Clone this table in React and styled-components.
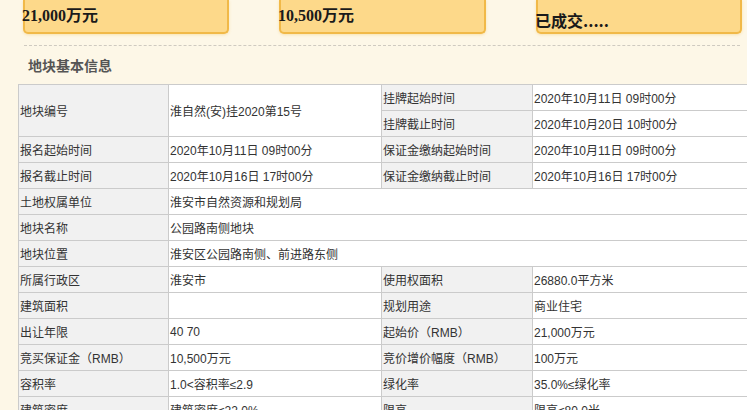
import styled, { createGlobalStyle } from 'styled-components';

const GlobalStyle = createGlobalStyle`
  html, body {
    margin: 0;
    padding: 0;
    background: #fdf7e7;
    overflow: hidden;
  }
`;

const Page = styled.div`
  width: 747px;
  height: 410px;
  overflow: hidden;
  background: #fdf7e7;
  font-family: "Liberation Sans", "Noto Sans CJK SC", sans-serif;
  color: #333;
`;

const PriceStrip = styled.div`
  display: grid;
  grid-template-columns: 206px 207px 206px;
  column-gap: 50px;
  padding-left: 23px;
`;

const PriceCard = styled.div`
  height: 34px;
  box-sizing: border-box;
  background: #fdd98a;
  border: 2px solid #f1b948;
  border-top: none;
  border-radius: 0 0 5px 5px;
  box-shadow: 0 1px 3px rgba(240, 185, 72, 0.35);
  display: flex;
  align-items: flex-start;
  padding-top: ${p => (p.$sans ? '11px' : '7px')};
`;

const PriceText = styled.span`
  margin-left: -3px;
  font-family: ${p => (p.$sans
    ? '"Noto Sans CJK SC", "Liberation Sans", sans-serif'
    : '"Liberation Serif", "Noto Sans CJK SC", serif')};
  font-weight: 700;
  font-size: 16px;
  line-height: 18px;
  color: #1a1a1a;
  white-space: nowrap;
`;

const Divider = styled.div`
  margin: 11px 7px 0 24px;
  border-top: 1px dashed #cfcac0;
`;

const SectionTitle = styled.h3`
  margin: 0;
  padding: 9px 0 0 28px;
  height: 29px;
  font-family: "Noto Sans CJK SC", sans-serif;
  font-size: 14px;
  line-height: 20px;
  font-weight: 700;
  color: #555;
`;

const TableWrap = styled.div`
  padding-left: 18px;
`;

const InfoTable = styled.table`
  border-collapse: collapse;
  table-layout: fixed;
  width: 780px;
  font-size: 12px;

  td {
    height: 25px;
    padding: 0 0 0 1px;
    border: 1px solid #cbcbcb;
    white-space: nowrap;
    overflow: hidden;
    vertical-align: middle;
  }
`;

const LabelCell = styled.td`
  background: #f1f1f1;
`;

const ValueCell = styled.td`
  background: #fff;
`;

const rows = [
  ['报名起始时间', '2020年10月11日 09时00分', '保证金缴纳起始时间', '2020年10月11日 09时00分'],
  ['报名截止时间', '2020年10月16日 17时00分', '保证金缴纳截止时间', '2020年10月16日 17时00分'],
  ['土地权属单位', '淮安市自然资源和规划局'],
  ['地块名称', '公园路南侧地块'],
  ['地块位置', '淮安区公园路南侧、前进路东侧'],
  ['所属行政区', '淮安市', '使用权面积', '26880.0平方米'],
  ['建筑面积', '', '规划用途', '商业住宅'],
  ['出让年限', '40 70', '起始价（RMB）', '21,000万元'],
  ['竞买保证金（RMB）', '10,500万元', '竞价增价幅度（RMB）', '100万元'],
  ['容积率', '1.0<容积率≤2.9', '绿化率', '35.0%≤绿化率'],
  ['建筑密度', '建筑密度≤22.0%', '限高', '限高≤80.0米'],
];

export default function App() {
  return (
    <Page>
      <GlobalStyle />
      <PriceStrip>
        <PriceCard><PriceText>21,000万元</PriceText></PriceCard>
        <PriceCard><PriceText>10,500万元</PriceText></PriceCard>
        <PriceCard $sans><PriceText $sans>已成交.....</PriceText></PriceCard>
      </PriceStrip>
      <Divider />
      <SectionTitle>地块基本信息</SectionTitle>
      <TableWrap>
        <InfoTable>
          <colgroup>
            <col style={{ width: 150 }} />
            <col style={{ width: 213 }} />
            <col style={{ width: 151 }} />
            <col style={{ width: 266 }} />
          </colgroup>
          <tbody>
            <tr>
              <LabelCell rowSpan={2}>地块编号</LabelCell>
              <ValueCell rowSpan={2}>淮自然(安)挂2020第15号</ValueCell>
              <LabelCell>挂牌起始时间</LabelCell>
              <ValueCell>2020年10月11日 09时00分</ValueCell>
            </tr>
            <tr>
              <LabelCell>挂牌截止时间</LabelCell>
              <ValueCell>2020年10月20日 10时00分</ValueCell>
            </tr>
            {rows.map(r => (
              <tr key={r[0]}>
                <LabelCell>{r[0]}</LabelCell>
                {r.length === 2 ? (
                  <ValueCell colSpan={3}>{r[1]}</ValueCell>
                ) : (
                  <>
                    <ValueCell>{r[1]}</ValueCell>
                    <LabelCell>{r[2]}</LabelCell>
                    <ValueCell>{r[3]}</ValueCell>
                  </>
                )}
              </tr>
            ))}
          </tbody>
        </InfoTable>
      </TableWrap>
    </Page>
  );
}
